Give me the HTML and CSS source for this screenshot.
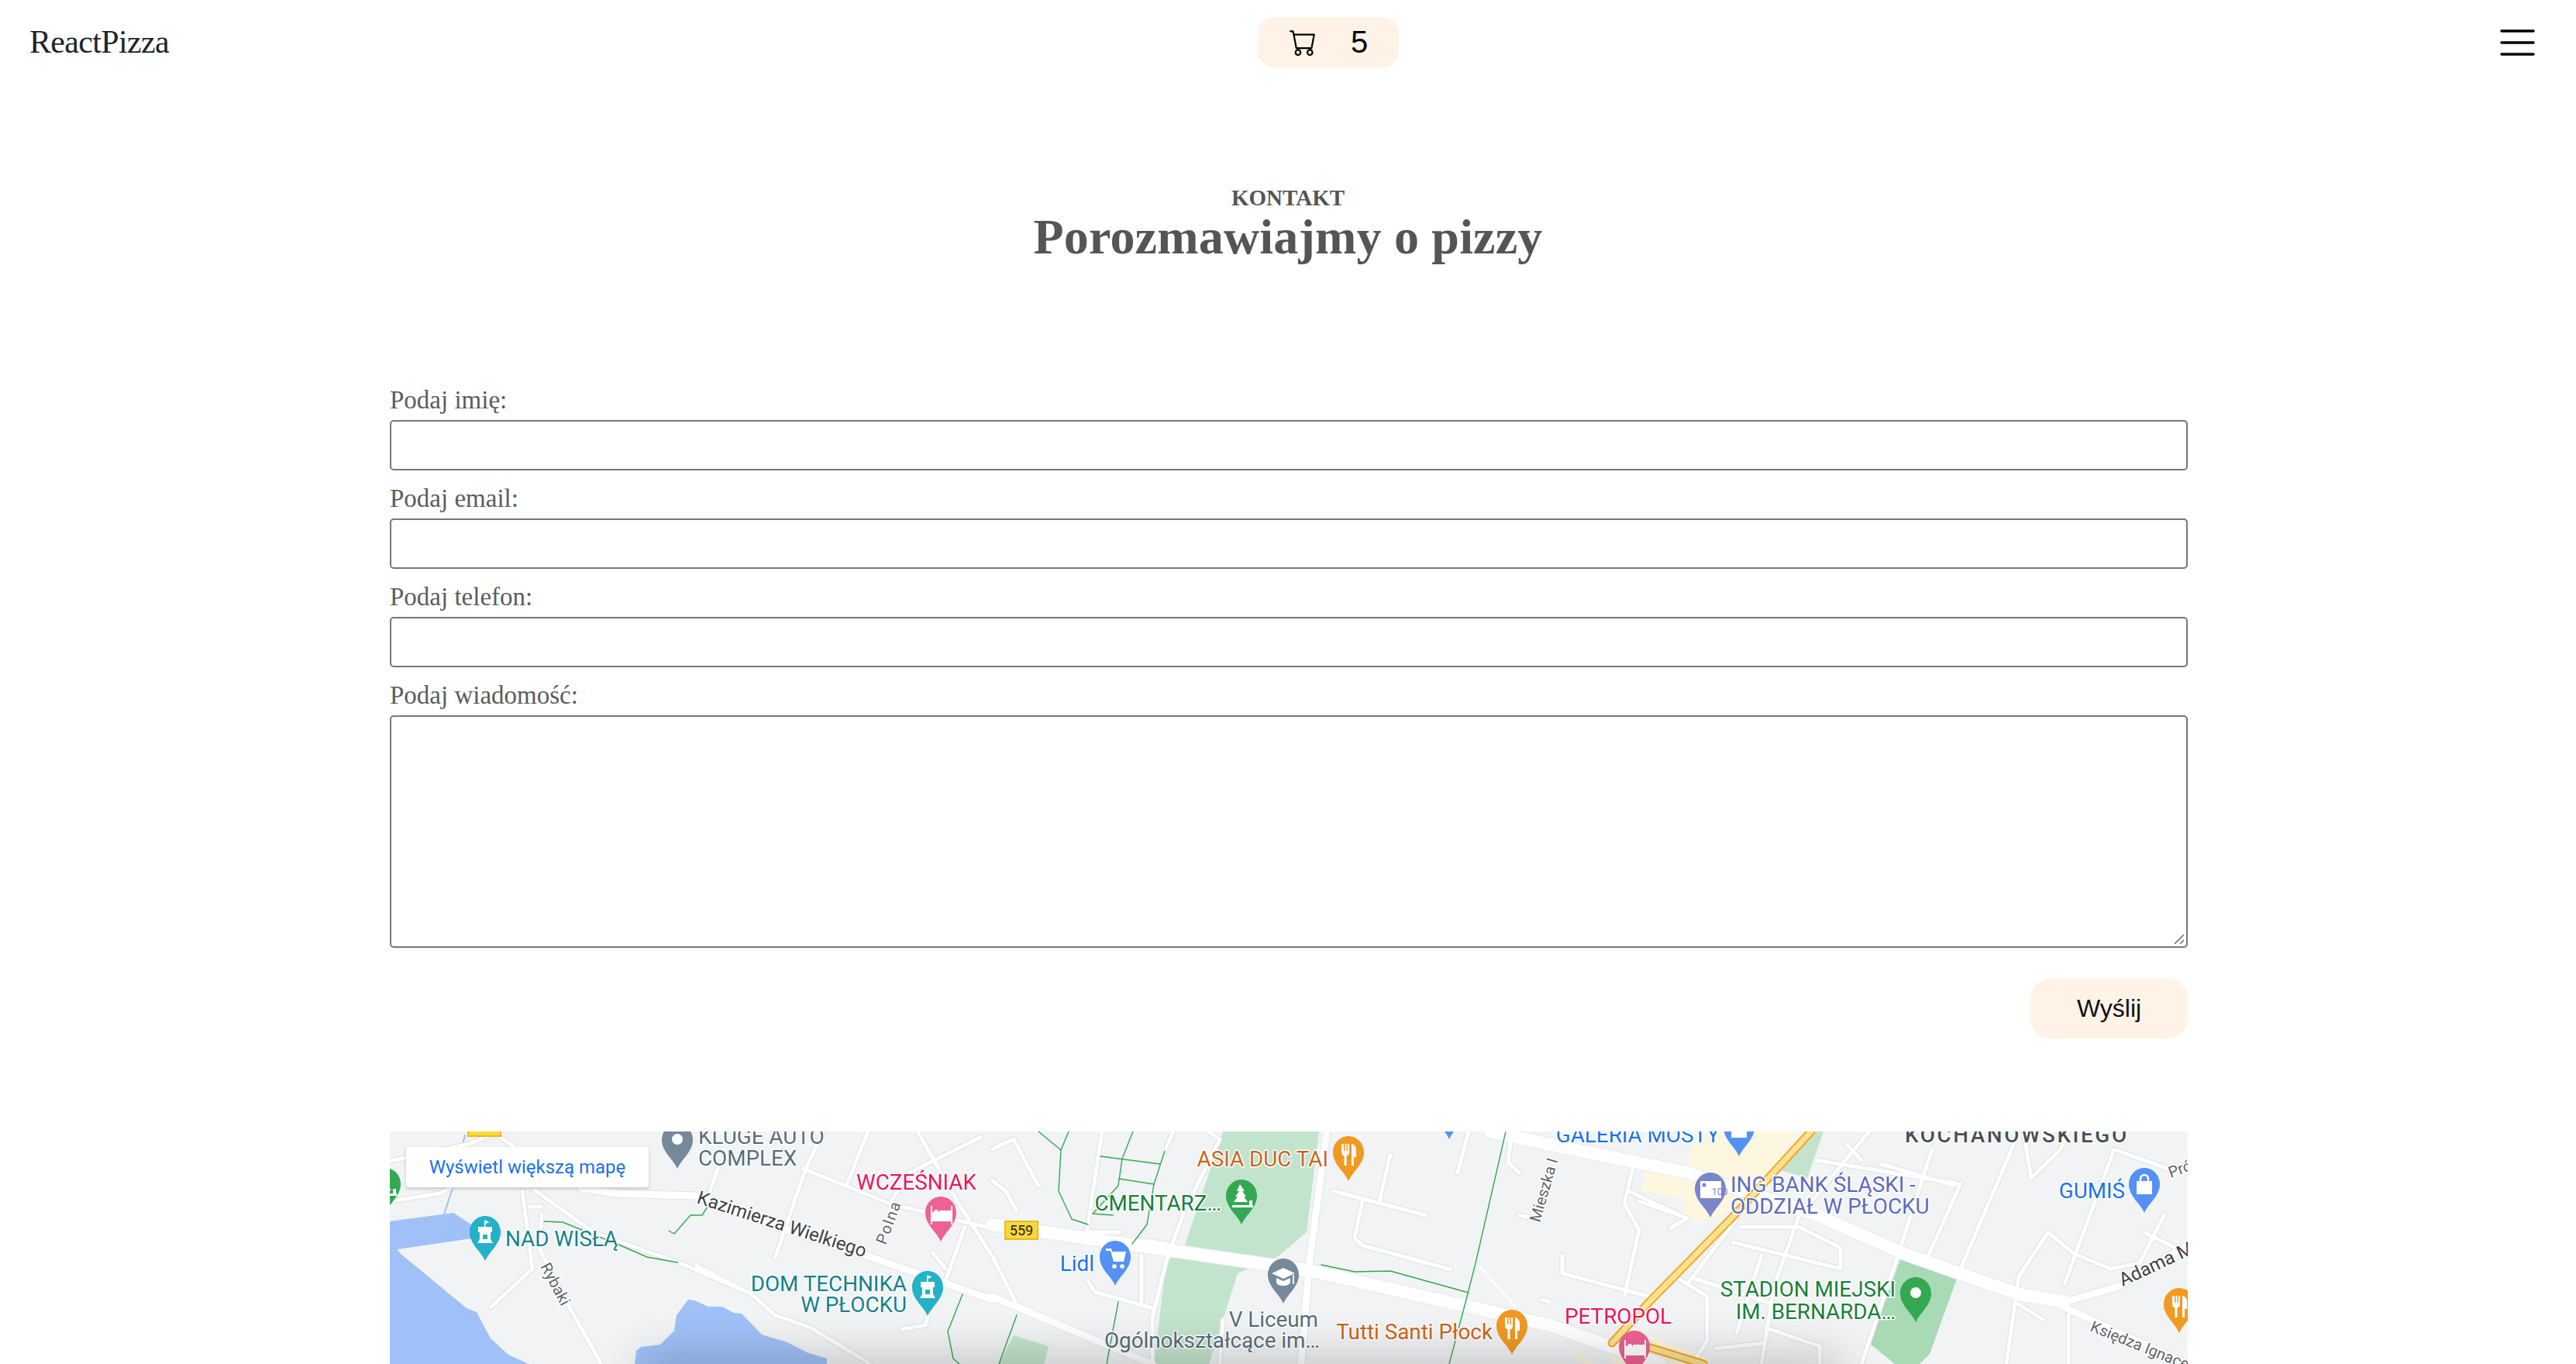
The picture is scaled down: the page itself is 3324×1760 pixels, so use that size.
FILE: index.html
```html
<!DOCTYPE html>
<html lang="pl">
  <head>
    <meta charset="UTF-8" />
    <meta name="viewport" content="width=device-width, initial-scale=1" />
    <title>ReactPizza - Kontakt</title>
    <link rel="stylesheet" href="styles.css">
  </head>
  <body>
    <header class="topbar">
      <a class="brand" href="#">ReactPizza</a>
      <a class="cart" href="#">
        <svg class="cart-icon" viewBox="0 0 16 16" fill="currentColor">
          <path d="M0 1.5A.5.5 0 0 1 .5 1H2a.5.5 0 0 1 .485.379L2.89 3H14.5a.5.5 0 0 1 .491.592l-1.5 8A.5.5 0 0 1 13 12H4a.5.5 0 0 1-.491-.408L2.01 3.607 1.61 2H.5a.5.5 0 0 1-.5-.5zM3.102 4l1.313 7h8.17l1.313-7H3.102zM5 12a2 2 0 1 0 0 4 2 2 0 0 0 0-4zm7 0a2 2 0 1 0 0 4 2 2 0 0 0 0-4zm-7 1a1 1 0 1 1 0 2 1 1 0 0 1 0-2zm7 0a1 1 0 1 1 0 2 1 1 0 0 1 0-2z" />
        </svg>
        <span>5</span>
      </a>
      <svg class="burger" viewBox="0 0 45 36" stroke="#000" stroke-width="3.500" stroke-linecap="round">
        <path d="M2 3h41M2 18h41M2 33h41" />
      </svg>
    </header>

    <section class="title">
      <p class="eyebrow">KONTAKT</p>
      <h1>Porozmawiajmy o pizzy</h1>
    </section>

    <main class="content">
      <form class="contact-form">
        <div class="field">
          <label for="name">Podaj imię:</label>
          <input type="text" id="name" />
        </div>
        <div class="field">
          <label for="email">Podaj email:</label>
          <input type="email" id="email" />
        </div>
        <div class="field">
          <label for="phone">Podaj telefon:</label>
          <input type="tel" id="phone" />
        </div>
        <div class="field">
          <label for="message">Podaj wiadomość:</label>
          <div class="textarea-wrap">
            <textarea id="message"></textarea>
            <svg class="grip" viewBox="0 0 14 14" stroke="#6f6f6f" stroke-width="1.6">
              <path d="M1 13L13 1M8 13l5-5" />
            </svg>
          </div>
        </div>
        <button type="submit">Wyślij</button>
      </form>

      <div class="map">
        <svg class="map-canvas" viewBox="0 0 2320 300" width="2320" height="300">
          <defs>
            <path id="pin" d="M20 0C9 0 0 9 0 21c0 8 4 14 9 21 5 6 9 11 11 16 2-5 6-10 11-16 5-7 9-13 9-21C40 9 31 0 20 0z" />
            <g id="i-dot"><circle cx="20" cy="20" r="7" /></g>
            <g id="i-food">
              <path d="M11 10v11c0 3 2 4 3.5 4.5V38h3V25.5C19 25 21 24 21 21V10h-2v9h-1.5v-9h-2v9H14v-9z" />
              <path d="M24 10v28h3V27h3V18c0-5-3-8-6-8z" />
            </g>
            <g id="i-castle">
              <path d="M19 6v8h1.5v-4l5-2-5-2.500z" />
              <path fill-rule="evenodd" d="M10 35l3-5V21h-2v-7h18v7h-2v9l3 5zM17 24v6h6v-6z" />
            </g>
            <g id="i-bed">
              <path d="M7 12h2v8h24v-5h0v-3h2v24h-2v-4H9v4H7z" />
              <circle cx="14" cy="20" r="3" />
              <path d="M18 18h15v6H18z" />
            </g>
            <g id="i-tree">
              <path d="M18 6l6 9h-3l5 7h-3l5 7H10l5-7h-3l5-7h-3z" />
              <path d="M8 33h27v3H8zM30 27h4v6h-4z" />
            </g>
            <g id="i-cart">
              <path d="M8 10h7l1 4h18l-3 13H18l-4-14H8z" />
              <circle cx="19" cy="33" r="2.800" />
              <circle cx="29" cy="33" r="2.800" />
            </g>
            <g id="i-cap">
              <path d="M20 12l15 7-15 7-15-7z" />
              <path d="M11 25v5c0 3 4 5 9 5s9-2 9-5v-5l-9 4z" />
              <path d="M32 21h2v12h-2z" />
            </g>
            <g id="i-bag">
              <path d="M10 17h20v17H10z" />
              <path d="M15 17v-3a5 5 0 0 1 10 0v3" fill="none" stroke="#fff" stroke-width="2.500" />
            </g>
            <g id="minor">
              <path d="M130 227L184 177 171 77M196 107L194 153 232 227 273 300M181 97H196" />
              <path d="M186 75L263 130 375 170 467 210 497 237 543 253 620 300M395 173L467 210" />
              <path d="M497 163L536 50 559 0M617 0L589 70M533 48L645 93 777 125" />
              <path d="M681 0L732 90 777 160 809 223M645 93L671 53 763 7M426 40L413 77" />
              <path d="M742 123L717 193M701 157L717 177M661 255L691 250 701 213" />
              <path d="M0 38L99 17 135 3M135 3L161 20M0 90L64 80 79 72" />
              <path d="M777 23L805 10 837 70M777 63L795 77 809 103M919 0L899 133M901 130H942" />
              <path d="M1011 0L1000 25M1057 0L1071 10 1025 103 1002 167 984 240V300M968 140L1002 145" />
              <path d="M901 193L910 207 984 228M970 160V220M1218 77L1337 108M1255 90L1245 137 1255 147 1369 178" />
              <path d="M1291 30L1277 90M1447 7L1443 40 1457 53M1378 53L1392 0M1075 243L1071 300M1457 108L1480 113M1486 217L1497 220" />
              <path d="M1604 47L1593 93 1612 127 1593 213M1599 77L1674 112 1652 125M1612 90L1674 112" />
              <path d="M1909 0L1818 110 1786 200 1770 300M1990 23L1947 157 1899 300M2097 13L2027 177M2027 67L1984 163" />
              <path d="M1840 37L2022 67M1925 42L2019 70M1880 17L1899 37M2108 0L2118 60 2156 23 2165 0" />
              <path d="M2225 23L2161 197M2225 23L2300 50M2140 130L2102 187 2086 300M2140 130L2172 157 2220 177 2258 170 2290 107M2263 130L2319 157" />
              <path d="M2102 223L2134 243M2166 237V300M1738 113L1674 197M1733 143L1872 177V150L1818 123 1743 123" />
              <path d="M1513 160V183L1625 213M1663 190L1700 213V270L1680 300M1770 160L1738 260M1684 190L1786 223" />
              <path d="M1775 253L1845 277V300M1711 280L1775 273" />
            </g>
            <g id="mid">
              <path d="M777 213L984 300M1209 0L1186 173 1176 300M2161 220L2231 200 2319 147M2161 227L2319 300" />
              <path d="M247 73L293 80 395 83 513 127 615 160 777 217" />
            </g>
            <g id="major">
              <path d="M777 120L1190 180 1497 250 1640 300M1420 0L1497 17 1674 53 1840 107 1952 157 2102 210 2161 220" />
            </g>
          </defs>

          <rect class="land" width="2320" height="300" />

          <path class="water-line" d="M97 4L82 70 70 107" />
          <path class="water" d="M0 116L82 105 105 120V138L10 152 13 157 99 228 112 233 130 267 153 288 179 300H0z" />
          <path class="water" d="M316 300L318 283 324 278 349 275 367 257 370 237 385 217 393 218 411 226 429 226 444 234 454 235 480 262 513 272 538 285 564 293V300z" />

          <path class="park" d="M1075 0H1199L1183 130 1144 163 1094 183 1057 300H986L1002 167 1023 155z" />
          <path class="park" d="M805 263L850 277 844 300H786z" />
          <path class="park" d="M1840 0H1850L1829 60 1794 50z" />
          <path class="park-dark" d="M1950 163L2022 190 1987 287 1974 300H1942L1909 273z" />

          <path class="built" d="M1687 0H1818L1786 47 1730 103 1687 118 1666 107 1676 87 1615 77 1620 52 1671 58 1676 37z" />
          <path class="built" d="M1572 285L1600 250 1640 270 1700 290V300H1580zM1524 278L1556 300H1540z" />

          <g class="strokes">
            <use href="#minor" class="minor-case" />
            <use href="#mid" class="mid-case" />
            <use href="#major" class="major-case" />
            <use href="#minor" class="minor-road" />
            <use href="#mid" class="mid-road" />
            <use href="#major" class="major-road" />
            <path class="path-thin" d="M1404 172L1452 225" />

            <path class="trail" d="M199 116L223 117 293 145 332 162 372 169M410 97L403 108H388L367 132 360 128M739 210L720 258 727 293 735 300" />
            <path class="trail" d="M917 32L994 42M941 61L986 68M837 0L866 24 863 77 880 113 901 120M876 0L866 24" />
            <path class="trail" d="M959 0L945 35 940 70 907 106 933 108M1000 25L986 68 977 120 958 145" />
            <path class="trail" d="M1202 172L1245 181 1291 180 1392 208M1440 0L1401 170 1390 213 1367 300M809 237L786 300M940 220L925 300" />

            <path class="hw-edge" d="M1834 0L1733 110 1625 220 1577 273" />
            <path class="hw-fill" d="M1834 0L1733 110 1625 220 1577 273" />
            <path class="hw-edge" d="M1620 277L1695 300" />
            <path class="hw-fill" d="M1620 277L1695 300" />
          </g>

          <rect class="shield" x="101" y="-4" width="42" height="10" />
          <rect class="shield" x="794" y="116" width="42" height="23" />
          <text class="shield-text" x="815" y="134">559</text>

          <g class="pin-gray" transform="translate(351 -10)"><use href="#pin" /><use href="#i-dot" class="glyph" /></g>
          <g class="pin-green" transform="translate(-26 47)"><use href="#pin" /><use href="#i-tree" class="glyph" /></g>
          <g class="pin-teal" transform="translate(103 109)"><use href="#pin" /><use href="#i-castle" class="glyph" /></g>
          <g class="pin-pink" transform="translate(691 84)"><use href="#pin" /><use href="#i-bed" class="glyph" /></g>
          <g class="pin-teal" transform="translate(674 180)"><use href="#pin" /><use href="#i-castle" class="glyph" /></g>
          <g class="pin-orange" transform="translate(1217 6)"><use href="#pin" /><use href="#i-food" class="glyph" /></g>
          <g class="pin-green" transform="translate(1079 62)"><use href="#pin" /><use href="#i-tree" class="glyph" /></g>
          <g class="pin-blue" transform="translate(916 141)"><use href="#pin" /><use href="#i-cart" class="glyph" /></g>
          <g class="pin-blue" transform="translate(1347 -48)"><use href="#pin" /></g>
          <g class="pin-gray" transform="translate(1133 164)"><use href="#pin" /><use href="#i-cap" class="glyph" /></g>
          <g class="pin-orange" transform="translate(1428 230)"><use href="#pin" /><use href="#i-food" class="glyph" /></g>
          <g class="pin-blue" transform="translate(1721 -26)"><use href="#pin" /><use href="#i-bag" class="glyph" /></g>
          <g class="pin-indigo" transform="translate(1684 53)">
            <use href="#pin" />
            <rect class="glyph" x="7" y="11" width="27" height="22" />
            <circle class="pin-indigo-dot" cx="12" cy="16" r="2.500" />
            <text class="bank-note" x="22" y="29">100</text>
          </g>
          <g class="pin-blue" transform="translate(2244 47)"><use href="#pin" /><use href="#i-bag" class="glyph" /></g>
          <g class="pin-green" transform="translate(1949 188)"><use href="#pin" /><use href="#i-dot" class="glyph" /></g>
          <g class="pin-pink" transform="translate(1586 257)"><use href="#pin" /><use href="#i-bed" class="glyph" /></g>
          <g class="pin-orange" transform="translate(2289 202)"><use href="#pin" /><use href="#i-food" class="glyph" /></g>

          <text class="lbl slate" x="398" y="16">KLUGE AUTO</text>
          <text class="lbl slate" x="398" y="44">COMPLEX</text>
          <text class="lbl pink" x="602" y="75">WCZEŚNIAK</text>
          <text class="lbl teal" x="149" y="148">NAD WISŁĄ</text>
          <text class="lbl teal end" x="667" y="206">DOM TECHNIKA</text>
          <text class="lbl teal end" x="667" y="233">W PŁOCKU</text>
          <text class="lbl orange end" x="1211" y="45">ASIA DUC TAI</text>
          <text class="lbl green end" x="1073" y="102">CMENTARZ…</text>
          <text class="lbl blue end" x="909" y="180">Lidl</text>
          <text class="lbl slate end" x="1198" y="252">V Liceum</text>
          <text class="lbl slate end" x="1200" y="279">Ogólnokształcące im…</text>
          <text class="lbl orange end" x="1423" y="268">Tutti Santi Płock</text>
          <text class="lbl blue end" x="1716" y="14">GALERIA MOSTY</text>
          <text class="lbl indigo" x="1730" y="78">ING BANK ŚLĄSKI -</text>
          <text class="lbl indigo" x="1730" y="106">ODDZIAŁ W PŁOCKU</text>
          <text class="lbl blue end" x="2239" y="86">GUMIŚ</text>
          <text class="lbl green end" x="1943" y="213">STADION MIEJSKI</text>
          <text class="lbl green end" x="1943" y="242">IM. BERNARDA…</text>
          <text class="lbl pink" x="1516" y="248">PETROPOL</text>
          <text class="lbl district" x="1955" y="14">KOCHANOWSKIEGO</text>

          <text class="street dark" transform="translate(395 92) rotate(18)">Kazimierza Wielkiego</text>
          <text class="street small wide" transform="translate(640 147) rotate(-70)">Polna</text>
          <text class="street small" transform="translate(194 174) rotate(62)">Rybaki</text>
          <text class="street small" transform="translate(1484 118) rotate(-74)">Mieszka I</text>
          <text class="street small" transform="translate(2298 60) rotate(-20)">Próchnika</text>
          <text class="street dark" transform="translate(2236 200) rotate(-25)">Adama Mickiewicza</text>
          <text class="street small" transform="translate(2193 257) rotate(22)">Księdza Ignacego</text>
        </svg>
        <a class="map-link" href="#">Wyświetl większą mapę</a>
        <div class="map-shade"></div>
      </div>
    </main>
  </body>
</html>
```

FILE: styles.css
```css
/* Reset and basic styles */
* {
  margin: 0;
  padding: 0;
  box-sizing: border-box;
}
html {
  height: 100%;
  overflow: hidden;
}
body {
  font-family: "Liberation Serif", serif;
  background: #fff;
  color: #555;
  height: 100%;
  overflow: hidden;
}
a {
  text-decoration: none;
}

/* Top bar */
.topbar {
  display: flex;
  align-items: center;
  justify-content: space-between;
  padding: 22px 53px 22px 38px;
}
.brand {
  font-size: 42px;
  letter-spacing: -0.65px;
  line-height: 65px;
  color: #212529;
}
.cart {
  display: flex;
  align-items: center;
  gap: 44px;
  height: 65px;
  margin-right: 16px;
  padding: 0 40px 0 41px;
  border-radius: 21px;
  background: #fff3e7;
  color: #000;
  font-family: "Liberation Sans", sans-serif;
  font-size: 40px;
}
.cart-icon {
  width: 35px;
  height: 35px;
}
.burger {
  width: 45px;
  height: 36px;
}

/* Heading */
.title {
  padding: 129px 0 156px;
  text-align: center;
}
.eyebrow {
  font-size: 29px;
  font-weight: 700;
  line-height: 34px;
}
h1 {
  font-size: 64px;
  font-weight: 700;
  line-height: 68px;
  letter-spacing: 0.2px;
}

/* Form */
.content {
  padding: 0 501px 0 503px;
}
.contact-form {
  display: flex;
  flex-direction: column;
  gap: 16px;
}
.field {
  display: flex;
  flex-direction: column;
  gap: 6px;
}
label {
  font-size: 33px;
  line-height: 40px;
  color: #5c5c5c;
}
input,
textarea {
  display: block;
  width: 100%;
  border: 2px solid #767676;
  border-radius: 5px;
  background: #fff;
}
input {
  height: 65px;
}
textarea {
  height: 300px;
  resize: none;
}
.textarea-wrap {
  position: relative;
}
.grip {
  position: absolute;
  right: 4px;
  bottom: 4px;
  width: 14px;
  height: 14px;
}
button {
  align-self: flex-end;
  width: 203px;
  height: 77px;
  margin-top: 24px;
  border: none;
  border-radius: 25px;
  background: #fff3e7;
  color: #111;
  font-family: "Liberation Sans", sans-serif;
  font-size: 32px;
  cursor: pointer;
}

/* Map */
.map {
  position: relative;
  width: 2320px;
  height: 300px;
  margin-top: 120px;
  overflow: hidden;
}
.map-canvas {
  display: block;
}
.map-link {
  position: absolute;
  left: 21px;
  top: 20px;
  width: 313px;
  height: 52px;
  border-radius: 4px;
  background: #fff;
  box-shadow: 0 2px 4px rgba(0, 0, 0, 0.2);
  color: #1a73e8;
  font-family: Roboto, sans-serif;
  font-size: 24px;
  line-height: 52px;
  text-align: center;
}
.map-shade {
  position: absolute;
  left: 330px;
  top: 300px;
  width: 1540px;
  height: 30px;
  box-shadow: 0 0 60px 4px rgba(0, 0, 0, 0.28);
}

.land {
  fill: #f1f3f4;
}
.water {
  fill: #9fc1f7;
}
.water-line {
  fill: none;
  stroke: #9fc1f7;
  stroke-width: 2;
}
.park {
  fill: #c3e4cc;
}
.park-dark {
  fill: #a8dab5;
}
.built {
  fill: #fef7e0;
}
.strokes {
  fill: none;
  stroke-linecap: round;
  stroke-linejoin: round;
}
.minor-case {
  stroke: #dfe1e5;
  stroke-width: 7;
}
.minor-road {
  stroke: #fff;
  stroke-width: 5;
}
.mid-case {
  stroke: #e3e5e8;
  stroke-width: 11;
}
.mid-road {
  stroke: #fff;
  stroke-width: 9;
}
.major-case {
  stroke: #e8eaed;
  stroke-width: 18;
}
.major-road {
  stroke: #fff;
  stroke-width: 16;
}
.path-thin {
  stroke: #fff;
  stroke-width: 2;
}
.trail {
  stroke: #34a853;
  stroke-width: 1.4;
}
.hw-edge {
  stroke: #f5a623;
  stroke-width: 11;
}
.hw-fill {
  stroke: #fde293;
  stroke-width: 7;
}
.shield {
  fill: #fdd835;
  stroke: #e8b92e;
  stroke-width: 2;
}
.shield-text {
  font-family: Roboto, sans-serif;
  font-size: 18px;
  text-anchor: middle;
  fill: #222;
}
.glyph {
  fill: #fff;
}
.pin-gray { fill: #76899a; }
.pin-green { fill: #34a853; }
.pin-teal { fill: #24b2c9; }
.pin-pink { fill: #ee6292; }
.pin-orange { fill: #f09a22; }
.pin-blue { fill: #5491f5; }
.pin-indigo { fill: #7986cb; }
.pin-indigo-dot { fill: #7986cb; }
.bank-note {
  font-family: Roboto, sans-serif;
  font-size: 12px;
  fill: #7986cb;
}

.lbl,
.street {
  font-family: Roboto, sans-serif;
  paint-order: stroke;
  stroke: #fff;
  stroke-width: 3px;
  stroke-linejoin: round;
}
.lbl {
  font-size: 27.8px;
}
.end {
  text-anchor: end;
}
.slate { fill: #566e7c; }
.pink { fill: #e8175d; }
.teal { fill: #12828f; }
.orange { fill: #c9651b; }
.green { fill: #188038; }
.blue { fill: #1a73e8; }
.indigo { fill: #5c6bc0; }
.district {
  fill: #4a4f55;
  font-weight: 500;
  letter-spacing: 2.6px;
}
.street.dark {
  fill: #3c4043;
  font-size: 24px;
}
.street.small {
  fill: #5f6368;
  font-size: 20px;
}
.street.wide {
  letter-spacing: 1.5px;
}
```
